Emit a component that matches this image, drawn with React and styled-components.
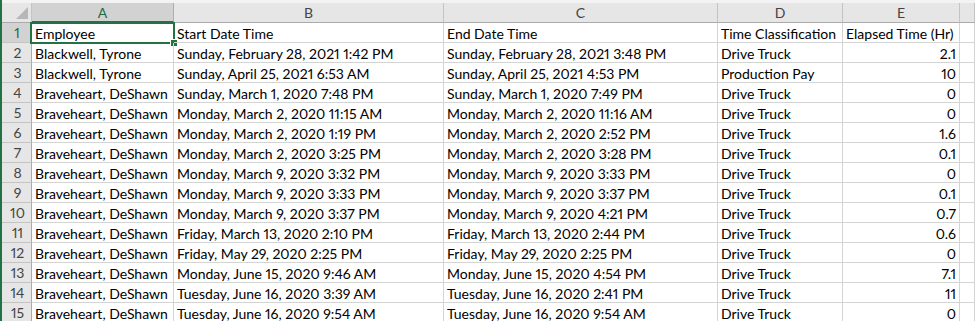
import styled, { createGlobalStyle } from 'styled-components';

const GlobalStyle = createGlobalStyle`
	html, body {
		margin: 0;
		padding: 0;
		background: #ffffff;
	}
	body {
		font-family: Lato, 'Liberation Sans', sans-serif;
		font-size: 14px;
		font-variant-numeric: proportional-nums;
		color: #000000;
	}
`;

const columns = ['A', 'B', 'C', 'D', 'E', ''];

const rows = [
	['Employee', 'Start Date Time', 'End Date Time', 'Time Classification', 'Elapsed Time (Hr)'],
	['Blackwell, Tyrone', 'Sunday, February 28, 2021 1:42 PM', 'Sunday, February 28, 2021 3:48 PM', 'Drive Truck', 2.1],
	['Blackwell, Tyrone', 'Sunday, April 25, 2021 6:53 AM', 'Sunday, April 25, 2021 4:53 PM', 'Production Pay', 10],
	['Braveheart, DeShawn', 'Sunday, March 1, 2020 7:48 PM', 'Sunday, March 1, 2020 7:49 PM', 'Drive Truck', 0],
	['Braveheart, DeShawn', 'Monday, March 2, 2020 11:15 AM', 'Monday, March 2, 2020 11:16 AM', 'Drive Truck', 0],
	['Braveheart, DeShawn', 'Monday, March 2, 2020 1:19 PM', 'Monday, March 2, 2020 2:52 PM', 'Drive Truck', 1.6],
	['Braveheart, DeShawn', 'Monday, March 2, 2020 3:25 PM', 'Monday, March 2, 2020 3:28 PM', 'Drive Truck', 0.1],
	['Braveheart, DeShawn', 'Monday, March 9, 2020 3:32 PM', 'Monday, March 9, 2020 3:33 PM', 'Drive Truck', 0],
	['Braveheart, DeShawn', 'Monday, March 9, 2020 3:33 PM', 'Monday, March 9, 2020 3:37 PM', 'Drive Truck', 0.1],
	['Braveheart, DeShawn', 'Monday, March 9, 2020 3:37 PM', 'Monday, March 9, 2020 4:21 PM', 'Drive Truck', 0.7],
	['Braveheart, DeShawn', 'Friday, March 13, 2020 2:10 PM', 'Friday, March 13, 2020 2:44 PM', 'Drive Truck', 0.6],
	['Braveheart, DeShawn', 'Friday, May 29, 2020 2:25 PM', 'Friday, May 29, 2020 2:25 PM', 'Drive Truck', 0],
	['Braveheart, DeShawn', 'Monday, June 15, 2020 9:46 AM', 'Monday, June 15, 2020 4:54 PM', 'Drive Truck', 7.1],
	['Braveheart, DeShawn', 'Tuesday, June 16, 2020 3:39 AM', 'Tuesday, June 16, 2020 2:41 PM', 'Drive Truck', 11],
	['Braveheart, DeShawn', 'Tuesday, June 16, 2020 9:54 AM', 'Tuesday, June 16, 2020 9:54 AM', 'Drive Truck', 0],
];

export default function App() {
	return (
		<Sheet>
			<GlobalStyle />
			<TopStrip />
			<Grid>
				<Corner>
					<svg width="12" height="12" viewBox="0 0 12 12">
						<polygon points="12,0 12,12 0,12" fill="#b7b7b7" />
					</svg>
				</Corner>
				{columns.map((c, i) => (
					<ColHeader key={'h' + i} selected={c === 'A'}>
						{c}
					</ColHeader>
				))}
				{rows.map((row, r) => (
					<Row key={r} row={row} index={r + 1} />
				))}
			</Grid>
		</Sheet>
	);
}

function Row({ row, index }) {
	return (
		<>
			<RowHeader selected={index === 1}>{index}</RowHeader>
			{row.map((value, i) => (
				<Cell key={i} numeric={typeof value === 'number'}>
					{value}
					{index === 1 && i === 0 && (
						<Selection>
							<Handle />
						</Selection>
					)}
				</Cell>
			))}
			<Cell />
		</>
	);
}

const Sheet = styled.div`
	width: 975px;
	height: 321px;
	overflow: hidden;
	border-left: 2px solid #217346;
	box-sizing: border-box;
	background: #ffffff;
`;

const TopStrip = styled.div`
	height: 3px;
	background: #f3f3f3;
`;

const Grid = styled.div`
	display: grid;
	grid-template-columns: 30px 142px 270px 274px 125px 117px 1fr;
	grid-auto-rows: 20px;
`;

const Corner = styled.div`
	background: #e6e6e6;
	border-right: 1px solid #c4c4c4;
	border-bottom: 1px solid #ababab;
	box-sizing: border-box;
	display: flex;
	align-items: flex-end;
	justify-content: flex-end;
	padding: 0 3px 3px 0;
`;

const ColHeader = styled.div`
	background: ${(p) => (p.selected ? '#d2d2d2' : '#e6e6e6')};
	color: ${(p) => (p.selected ? '#1e6b41' : '#444444')};
	border-right: 1px solid ${(p) => (p.selected ? '#9fb5a6' : '#c4c4c4')};
	border-bottom: ${(p) => (p.selected ? '2px solid #217346' : '1px solid #ababab')};
	box-sizing: border-box;
	display: flex;
	align-items: center;
	justify-content: center;
	padding-top: ${(p) => (p.selected ? '1px' : '0')};
`;

const RowHeader = styled.div`
	background: ${(p) => (p.selected ? '#d2d2d2' : '#e6e6e6')};
	color: ${(p) => (p.selected ? '#1e6b41' : '#444444')};
	border-right: ${(p) => (p.selected ? '2px solid #217346' : '1px solid #ababab')};
	border-bottom: 1px solid #c4c4c4;
	box-sizing: border-box;
	display: flex;
	align-items: center;
	justify-content: center;
	padding-left: 2px;
`;

const Cell = styled.div`
	position: relative;
	border-right: 1px solid #d4d4d4;
	border-bottom: 1px solid #d4d4d4;
	box-sizing: border-box;
	display: flex;
	align-items: center;
	justify-content: ${(p) => (p.numeric ? 'flex-end' : 'flex-start')};
	padding: 1px 3px 0 3px;
	white-space: nowrap;
	overflow: visible;
`;

const Selection = styled.div`
	position: absolute;
	left: -2px;
	top: -1px;
	right: -2px;
	bottom: -2px;
	border: 2px solid #217346;
	pointer-events: none;
`;

const Handle = styled.div`
	position: absolute;
	right: -5px;
	bottom: -5px;
	width: 6px;
	height: 6px;
	background: #217346;
	border: 1px solid #ffffff;
`;
